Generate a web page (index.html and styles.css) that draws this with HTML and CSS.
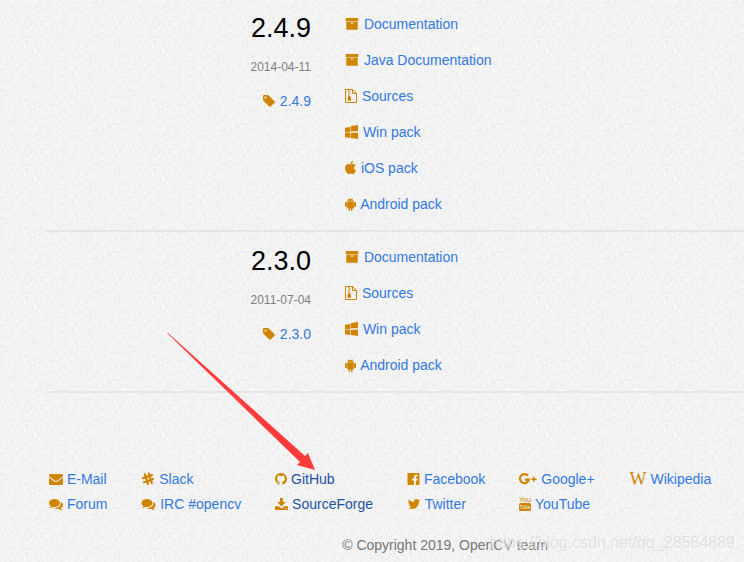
FILE: index.html
```html
<!DOCTYPE html>
<html lang="en">
<head>
  <meta charset="UTF-8">
  <meta name="viewport" content="width=device-width, initial-scale=1.0">
  <title>Releases - OpenCV</title>
  <link rel="stylesheet" href="styles.css">
</head>
<body>
  <!-- shared icons -->
  <svg class="sprite" aria-hidden="true">
    <symbol id="archive" viewBox="0 0 14 14"><path fill-rule="evenodd" d="M.8 1h12.400v3H.8zM1.300 4.400h11.400v7.900q0 .5-.5.5H1.800q-.5 0-.5-.5zM5.500 5.500v1h3v-1z"/></symbol>
    <symbol id="zip" viewBox="0 0 12 14"><path fill="none" stroke="currentColor" d="M.5.5h7l4 4v9H.5zM7.500.5v4h4"/><path d="M3 1h1.200v1H3zM4.200 2h1.200v1H4.200zM3 3h1.200v1H3zM4.200 4h1.200v1H4.200zM3 5h1.200v1H3zM3.500 6.500h1.500l1.200 3.500q.2 2-1.900 2T2.400 10z"/></symbol>
    <symbol id="windows" viewBox="0 0 1664 1792"><path d="M682 1006v651l-682-94v-557h682zm0-743v659h-682v-565zm982 743v786l-907-125v-661h907zm0-1006v794h-907v-669z"/></symbol>
    <symbol id="apple" viewBox="192 0 1408 1792"><path d="M1585 1215q-39 125-123 250-129 196-257 196-49 0-140-32-86-32-151-32-61 0-142 33-81 34-132 34-152 0-301-259-147-261-147-503 0-228 113-374 113-144 284-144 72 0 177 30 104 30 138 30 45 0 143-34 102-34 173-34 119 0 213 65 52 36 104 100-79 67-114 118-65 94-65 207 0 124 69 223t158 126zm-376-1173q0 61-29 136-30 75-93 138-54 54-108 72-37 11-104 17 3-149 78-257 74-107 250-148 1 3 2.500 11t2.500 11q0 4 .5 10t.5 10z"/></symbol>
    <symbol id="android" viewBox="0 0 11 14"><path fill-rule="evenodd" d="M2.200 4.700Q2.300 2.900 3.900 2L3.200.8l.3-.2.8 1.300q1.200-.4 2.400 0L7.500.6l.3.2L7.100 2q1.600.9 1.700 2.700zM3.700 3v.7h.7V3zM6.600 3v.7h.7V3zM2.200 5.100h6.600v5.700q0 .7-.7.7h-.7v1.700q0 .7-.7.7t-.7-.7v-1.700H5v1.700q0 .7-.7.7t-.7-.7v-1.700h-.7q-.7 0-.7-.7z"/><rect y="5" width="1.900" height="5" rx=".8"/><rect x="9.100" y="5" width="1.900" height="5" rx=".8"/></symbol>
    <symbol id="tag" viewBox="128 0 1664 1792"><path d="M576 448q0-53-37.500-90.500t-90.500-37.500-90.500 37.500-37.500 90.500 37.500 90.500 90.500 37.500 90.500-37.500 37.500-90.500zm1067 576q0 53-37 90l-491 492q-39 37-91 37-53 0-90-37l-715-716q-38-37-64.500-101t-26.500-117v-416q0-52 38-90t90-38h416q53 0 117 26.500t102 64.500l715 714q37 39 37 91z"/></symbol>
    <symbol id="envelope" viewBox="0 0 1792 1792"><path d="M1792 710v794q0 66-47 113t-113 47h-1472q-66 0-113-47t-47-113v-794q44 49 101 87 362 246 497 345 57 42 92.500 65.500t94.500 48 110 24.500h2q51 0 110-24.500t94.500-48 92.500-65.500q170-123 498-345 57-39 100-87zm0-294q0 79-49 151t-122 123q-376 261-468 325-10 7-42.500 31t-54 38.500-52 32.500-57.500 27-50 9h-2q-23 0-50-9t-57.500-27-52-32.500-54-38.500-42.500-31q-91-64-262-182.500t-205-142.500q-62-42-117-115.500t-55-136.500q0-78 41.500-130t118.500-52h1472q65 0 112.500 47t47.500 113z"/></symbol>
    <symbol id="comments" viewBox="0 0 1792 1792"><path d="M1408 768q0 139-94 257t-256.500 186.500-353.500 68.500q-86 0-176-16-124 88-278 128-36 9-86 16h-3q-11 0-20.500-8t-11.500-21q-1-3-1-6.500t.5-6.500 2-6l2.500-5 3.500-5.500 4-5 4.500-5 4-4.500q5-6 23-25t26-29.500 22.500-29 25-38.500 20.500-44q-124-72-195-177t-71-224q0-139 94-257t256.500-186.500 353.500-68.500 353.500 68.500 256.500 186.500 94 257zm384 256q0 120-71 224.500t-195 176.500q10 24 20.500 44t25 38.500 22.500 29 26 29.500 23 25q1 1 4 4.500t4.500 5 4 5 3.500 5.500l2.500 5 2 6 .5 6.500-1 6.500q-3 14-13 22t-22 7q-50-7-86-16-154-40-278-128-90 16-176 16-271 0-472-132 58 4 88 4 161 0 309-45t264-129q125-92 192-212t67-254q0-77-23-152 129 71 204 178t75 230z"/></symbol>
    <symbol id="slack" viewBox="0 0 13 14"><path fill="none" stroke="currentColor" stroke-width="2.200" stroke-linecap="round" d="M3.400 2.300l3 9.700M7.300 1.500l3 9.700M1.500 6.100l9-3M2.400 10.200l9.200-3.100"/></symbol>
    <symbol id="github" viewBox="128 0 1536 1792"><path d="M896 128q209 0 385.500 103t279.500 279.500 103 385.500q0 251-146.500 451.500t-378.500 277.500q-27 5-40-7t-13-30q0-3 .5-76.500t.5-134.500q0-97-52-142 57-6 102.500-18t94-39 81-66.500 53-105 20.500-150.500q0-119-79-206 37-91-8-204-28-9-81 11t-92 44l-38 24q-93-26-192-26t-192 26q-16-11-42.500-27t-83.500-38.500-85-13.500q-45 113-8 204-79 87-79 206 0 85 20.500 150t52.500 105 80.500 67 94 39 102.500 18q-39 36-49 103-21 10-45 15t-57 5-65.500-21.500-55.500-62.500q-19-32-48.500-52t-49.500-24l-20-3q-21 0-29 4.500t-5 11.500 9 14 13 12l7 5q22 10 43.500 38t31.500 51l10 23q13 38 44 61.500t67 30 69.500 7 55.500-3.500l23-4q0 38 .5 88.500t.5 54.500q0 18-13 30t-40 7q-232-77-378.500-277.500t-146.500-451.500q0-209 103-385.500t279.500-279.500 385.500-103z"/></symbol>
    <symbol id="download" viewBox="0 0 13 14"><path fill-rule="evenodd" d="M5 1h3v4h2.800L6.500 9.500 2.200 5H5zM0 9.200h3.800l1.300 1.300q1.400 1.200 2.800 0l1.300-1.300H13V13H0zM9 11.200v.9h.9v-.9zM11 11.200v.9h.9v-.9z"/></symbol>
    <symbol id="facebook" viewBox="0 0 12 14"><path d="M.7 1h10.600q.7 0 .7.7v10.600q0 .7-.7.7H8.300V8.400h1.500l.3-1.800H8.300V5.400q0-.9.9-.9h1V2.900Q6.400 2.400 6.400 5.200v1.400H4.800v1.800h1.600V13H.7q-.7 0-.7-.7V1.700Q0 1 .7 1z"/></symbol>
    <symbol id="twitter" viewBox="64 0 1664 1792"><path d="M1684 408q-67 98-162 167 1 14 1 42 0 130-38 259.500t-115.500 248.500-184.500 210.500-258 146-323 54.500q-271 0-496-145 35 4 78 4 225 0 401-138-105-2-188-64.500t-114-159.500q33 5 61 5 43 0 85-11-112-23-185.500-111.500t-73.500-205.500v-4q68 38 146 41-66-44-105-115t-39-154q0-88 44-163 121 149 294.500 238.500t371.500 99.500q-8-38-8-74 0-134 94.500-228.500t228.500-94.500q140 0 236 102 109-21 205-78-37 115-142 178 93-10 186-50z"/></symbol>
    <symbol id="google" viewBox="0 0 18 14"><path fill="none" stroke="currentColor" stroke-width="2.200" d="M9 3.800A4.500 4.500 0 1 0 9.900 7.600H6"/><path d="M14 4.800h1.600v1.600h1.900V8h-1.900v1.700H14V8h-1.800V6.400H14z"/></symbol>
    <symbol id="youtube" viewBox="0 0 12 14"><text x="6" y="5" font-size="7" text-anchor="middle">You</text><rect y="6" width="12" height="8" rx="1.500"/><text class="tube" x="6" y="12" font-size="5" text-anchor="middle">Tube</text></symbol>
    <symbol id="wikipedia" viewBox="0 0 18 14"><text class="serif" x="9" y="13" font-size="18" text-anchor="middle">W</text></symbol>
  </svg>

  <main class="releases">
    <section class="release">
      <div class="release-info">
        <h2>2.4.9</h2>
        <time datetime="2014-04-11">2014-04-11</time>
        <p><svg class="icon" viewBox="0 0 13 14"><use href="#tag"/></svg> <a href="#">2.4.9</a></p>
      </div>
      <ul class="release-links">
        <li><svg class="icon" viewBox="0 0 14 14"><use href="#archive"/></svg> <a href="#">Documentation</a></li>
        <li><svg class="icon" viewBox="0 0 14 14"><use href="#archive"/></svg> <a href="#">Java Documentation</a></li>
        <li><svg class="icon" viewBox="0 0 12 14"><use href="#zip"/></svg> <a href="#">Sources</a></li>
        <li><svg class="icon" viewBox="0 0 13 14"><use href="#windows"/></svg> <a href="#">Win pack</a></li>
        <li><svg class="icon" viewBox="0 0 11 14"><use href="#apple"/></svg> <a href="#">iOS pack</a></li>
        <li><svg class="icon" viewBox="0 0 11 14"><use href="#android"/></svg> <a href="#">Android pack</a></li>
      </ul>
    </section>
    <section class="release">
      <div class="release-info">
        <h2>2.3.0</h2>
        <time datetime="2011-07-04">2011-07-04</time>
        <p><svg class="icon" viewBox="0 0 13 14"><use href="#tag"/></svg> <a href="#">2.3.0</a></p>
      </div>
      <ul class="release-links">
        <li><svg class="icon" viewBox="0 0 14 14"><use href="#archive"/></svg> <a href="#">Documentation</a></li>
        <li><svg class="icon" viewBox="0 0 12 14"><use href="#zip"/></svg> <a href="#">Sources</a></li>
        <li><svg class="icon" viewBox="0 0 13 14"><use href="#windows"/></svg> <a href="#">Win pack</a></li>
        <li><svg class="icon" viewBox="0 0 11 14"><use href="#android"/></svg> <a href="#">Android pack</a></li>
      </ul>
    </section>
  </main>

  <footer class="footer">
    <nav class="footer-links">
      <ul>
        <li><svg class="icon" viewBox="0 0 14 14"><use href="#envelope"/></svg> <a href="#">E-Mail</a></li>
        <li><svg class="icon" viewBox="0 0 14 14"><use href="#comments"/></svg> <a href="#">Forum</a></li>
      </ul>
      <ul>
        <li><svg class="icon" viewBox="0 0 14 14"><use href="#slack"/></svg> <a href="#">Slack</a></li>
        <li><svg class="icon" viewBox="0 0 15 14"><use href="#comments"/></svg> <a href="#">IRC #opencv</a></li>
      </ul>
      <ul>
        <li><svg class="icon" viewBox="0 0 12 14"><use href="#github"/></svg> <a class="visited" href="#">GitHub</a></li>
        <li><svg class="icon" viewBox="0 0 13 14"><use href="#download"/></svg> <a class="visited" href="#">SourceForge</a></li>
      </ul>
      <ul>
        <li><svg class="icon" viewBox="0 0 13 14"><use href="#facebook"/></svg> <a href="#">Facebook</a></li>
        <li><svg class="icon" viewBox="0 0 14 14"><use href="#twitter"/></svg> <a href="#">Twitter</a></li>
      </ul>
      <ul>
        <li><svg class="icon" viewBox="0 0 18 14"><use href="#google"/></svg> <a href="#">Google+</a></li>
        <li><svg class="icon" viewBox="0 0 12 14"><use href="#youtube"/></svg> <a href="#">YouTube</a></li>
      </ul>
      <ul>
        <li><svg class="icon" viewBox="0 0 18 14"><use href="#wikipedia"/></svg> <a href="#">Wikipedia</a></li>
      </ul>
    </nav>
    <p class="copyright">© Copyright 2019, OpenCV team</p>
  </footer>

  <svg class="arrow" viewBox="0 0 150 138" aria-hidden="true"><path d="M0 0l1 0 137 123 3-3 7 17-18-5 3-3z"/></svg>
  <div class="watermark">https://blog.csdn.net/qq_28584889</div>
</body>
</html>
```

FILE: styles.css
```css
* {
  box-sizing: border-box;
}

body {
  position: relative;
  margin: 0;
  font-family: "Liberation Sans", Arial, sans-serif;
  font-size: 14px;
  line-height: 20px;
  color: #777;
  background-color: #f8f8f8;
  /* linen texture */
  background-image: url("data:image/svg+xml,%3Csvg xmlns='http://www.w3.org/2000/svg' width='128' height='128'%3E%3Cfilter id='a' x='0' y='0' width='1' height='1'%3E%3CfeTurbulence type='fractalNoise' baseFrequency='.2 .8' numOctaves='2' stitchTiles='stitch'/%3E%3CfeColorMatrix values='0 0 0 0 0 0 0 0 0 0 0 0 0 0 0 .1 0 0 0 -.04'/%3E%3C/filter%3E%3Cfilter id='b' x='0' y='0' width='1' height='1'%3E%3CfeTurbulence type='fractalNoise' baseFrequency='.8 .2' numOctaves='2' seed='4' stitchTiles='stitch'/%3E%3CfeColorMatrix values='0 0 0 0 0 0 0 0 0 0 0 0 0 0 0 .1 0 0 0 -.04'/%3E%3C/filter%3E%3Crect width='128' height='128' filter='url(%23a)'/%3E%3Crect width='128' height='128' filter='url(%23b)'/%3E%3C/svg%3E");
}

h2,
p,
ul {
  margin: 0;
  padding: 0;
}

ul {
  list-style: none;
}

a {
  color: #3379de;
  text-decoration: none;
}

a:hover,
.visited {
  color: #1b50a4;
}

.sprite {
  display: none;
}

.icon {
  height: 14px;
  color: #cf8500;
  fill: currentColor;
  vertical-align: -2px;
}

.tube {
  fill: #f3f3f3;
}

.serif {
  font-family: "Liberation Serif", "Times New Roman", serif;
}

.releases {
  margin-left: 45px;
}

.release {
  display: flex;
  gap: 34px;
  margin-bottom: 1px;
  padding: 14px 0 16px;
  border-bottom: 2px solid #e5e5e5;
}

.release-info {
  width: 266px;
  text-align: right;
}

.release-info h2 {
  font-size: 27px;
  font-weight: normal;
  line-height: 28px;
  color: #000;
}

.release-info time {
  display: block;
  margin: 15px 0 14px;
  font-size: 12px;
  color: #808080;
}

.release-links {
  display: flex;
  flex-direction: column;
  gap: 16px;
}

.release-links .icon {
  margin-right: 1px;
}

.footer {
  padding-top: 73px;
}

.footer-links {
  display: flex;
  gap: 34px;
  margin-left: 49px;
  line-height: 25px;
  white-space: nowrap;
}

.copyright {
  margin-left: 146px;
  padding: 18px 0 8px;
  text-align: center;
}

/* pointer drawn over the page */
.arrow {
  position: absolute;
  left: 167px;
  top: 333px;
  width: 150px;
  height: 138px;
  fill: #ff3b3b;
}

.watermark {
  position: absolute;
  right: 9px;
  bottom: 10px;
  font-size: 16px;
  color: rgba(210, 210, 210, 0.6);
  text-shadow: 1px 1px 0 rgba(255, 255, 255, 0.6);
}
```
